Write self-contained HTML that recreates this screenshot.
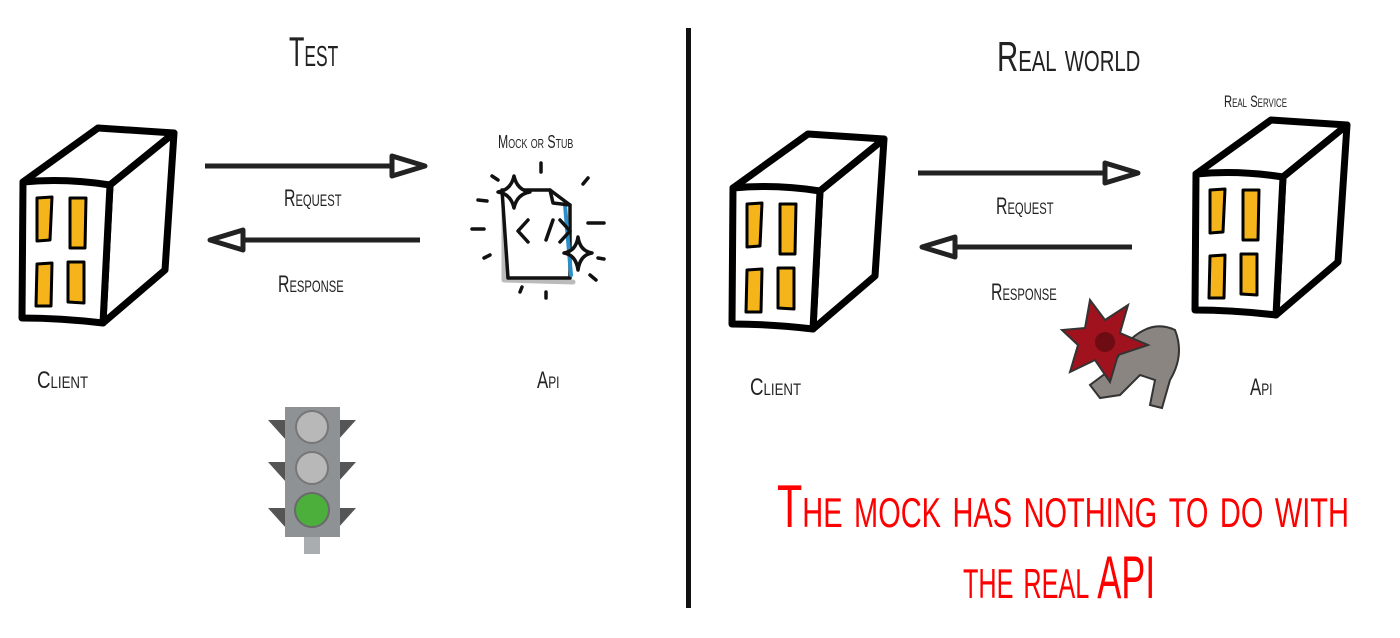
<!DOCTYPE html>
<html><head><meta charset="utf-8"><style>
html,body{margin:0;padding:0;background:#fff;width:1400px;height:638px;overflow:hidden;position:relative}
.t{position:absolute;font-family:"Liberation Sans Narrow","Liberation Sans",sans-serif;font-variant:small-caps;color:#222;white-space:nowrap;transform-origin:left top}
</style></head><body>
<svg width="1400" height="638" style="position:absolute;left:0;top:0">
<defs>
<g id="srv" fill="none" stroke="#000" stroke-width="7" stroke-linejoin="round" stroke-linecap="round">
<path d="M23,182 L98,128 L174,133 L110,185 Z" fill="#fff"/>
<path d="M174,133 L165,270 L103,323 L110,185 Z" fill="#fff"/>
<path d="M23,182 Q65,178 110,185 L103,323 Q60,318 22,318 Z" fill="#fff"/>
<g fill="#f4b41a" stroke-width="3">
<path d="M37,198 L52,197 L50,240 L37,241 Z"/>
<path d="M70,198 L86,198 L85,248 L70,248 Z"/>
<path d="M37,264 L52,263 L51,306 L36,306 Z"/>
<path d="M68,262 L84,262 L84,303 L68,302 Z"/>
</g>
</g>
</defs>
<use href="#srv"/>
<use href="#srv" transform="translate(710,6)"/>
<use href="#srv" transform="translate(1173,-8)"/>
<g stroke="#222" stroke-width="5" fill="#fff" stroke-linejoin="round">
<line x1="205" y1="166" x2="395" y2="166"/><path d="M392,156 L425,166 L392,176 Z"/>
<line x1="240" y1="240" x2="420" y2="240"/><path d="M243,230 L210,240 L243,250 Z"/>
<line x1="918" y1="173" x2="1108" y2="173"/><path d="M1105,163 L1138,173 L1105,183 Z"/>
<line x1="952" y1="247" x2="1132" y2="247"/><path d="M955,237 L922,247 L955,257 Z"/>
</g>
<rect x="686" y="28" width="5" height="580" fill="#111"/>
<g stroke="#111" stroke-width="3.5" fill="none" stroke-linecap="round" stroke-linejoin="round">
<path d="M504,197 L504,280 L573,282" stroke="#bbb" stroke-width="5"/>
<path d="M502,190 L550,190 L570,205 L570,278 L508,278 Z" fill="#fff"/>
<path d="M565,205 L571,275" stroke="#2a8fc9" stroke-width="4"/>
<path d="M550,190 L553,203 L570,205"/>
<path d="M528,220 L518,231 L528,242 M546,240 L553,220 M560,220 L570,231 L560,242"/>
<path d="M514,176 Q517,190 530,192 Q517,194 514,208 Q511,194 498,192 Q511,190 514,176 Z" fill="#fff"/>
<path d="M578,237 Q580,251 592,253 Q580,255 578,270 Q576,255 564,253 Q576,251 578,237 Z" fill="#fff"/>
<path d="M541,163 L541,172 M492,176 L498,180 M588,178 L583,184 M478,200 L487,201 M472,229 L484,229 M588,223 L604,223 M484,258 L490,255 M598,258 L604,259 M590,275 L596,280 M522,287 L520,292 M546,292 L546,298"/>
</g>
<g>
<path d="M268,420 L286,420 L286,440 Z M268,462 L286,462 L286,482 Z M268,508 L286,508 L286,528 Z" fill="#555"/>
<path d="M356,420 L338,420 L338,440 Z M356,462 L338,462 L338,482 Z M356,508 L338,508 L338,528 Z" fill="#555"/>
<rect x="285" y="407" width="55" height="130" fill="#8e9294"/>
<rect x="304" y="537" width="16" height="17" fill="#a9adaf"/>
<circle cx="312" cy="427" r="16" fill="#b8b8b8" stroke="#777" stroke-width="2"/>
<circle cx="312" cy="468" r="16" fill="#b8b8b8" stroke="#777" stroke-width="2"/>
<circle cx="312" cy="510" r="17" fill="#4caf3c" stroke="#6a6a6a" stroke-width="2"/>
</g>
<g>
<path d="M1125,345 Q1150,318 1175,330 Q1185,355 1170,380 L1162,408 L1150,405 L1155,380 L1140,375 L1120,395 L1100,398 L1090,385 L1110,370 Z" fill="#8a8580" stroke="#333" stroke-width="2"/>
<path d="M1090,300 L1105,320 L1128,305 L1120,333 L1148,345 L1118,355 L1110,382 L1095,360 L1070,372 L1078,345 L1062,330 L1085,328 Z" fill="#a0121e" stroke="#333" stroke-width="2"/>
<circle cx="1105" cy="342" r="10" fill="#6e0c14"/>
</g>
</svg>
<div class="t" style="left:289px;top:28px;font-size:42px;transform:scaleX(0.6)">Test</div>
<div class="t" style="left:997px;top:33px;font-size:42px;transform:scaleX(0.7)">Real world</div>
<div class="t" style="left:498px;top:132px;font-size:18px;transform:scaleX(0.68)">Mock or Stub</div>
<div class="t" style="left:1224px;top:92px;font-size:17px;transform:scaleX(0.66)">Real Service</div>
<div class="t" style="left:284px;top:185px;font-size:24px;transform:scaleX(0.66)">Request</div>
<div class="t" style="left:278px;top:271px;font-size:24px;transform:scaleX(0.66)">Response</div>
<div class="t" style="left:996px;top:193px;font-size:24px;transform:scaleX(0.66)">Request</div>
<div class="t" style="left:991px;top:279px;font-size:24px;transform:scaleX(0.66)">Response</div>
<div class="t" style="left:37px;top:367px;font-size:24px;transform:scaleX(0.78)">Client</div>
<div class="t" style="left:750px;top:374px;font-size:24px;transform:scaleX(0.78)">Client</div>
<div class="t" style="left:537px;top:367px;font-size:24px;transform:scaleX(0.7)">Api</div>
<div class="t" style="left:1250px;top:374px;font-size:24px;transform:scaleX(0.7)">Api</div>
<div class="t" style="left:777px;top:472px;font-size:60px;color:#f00;transform:scaleX(0.69)">The mock has nothing to do with</div>
<div class="t" style="left:963px;top:543px;font-size:60px;color:#f00;transform:scaleX(0.6)">the real API</div>
</body></html>
